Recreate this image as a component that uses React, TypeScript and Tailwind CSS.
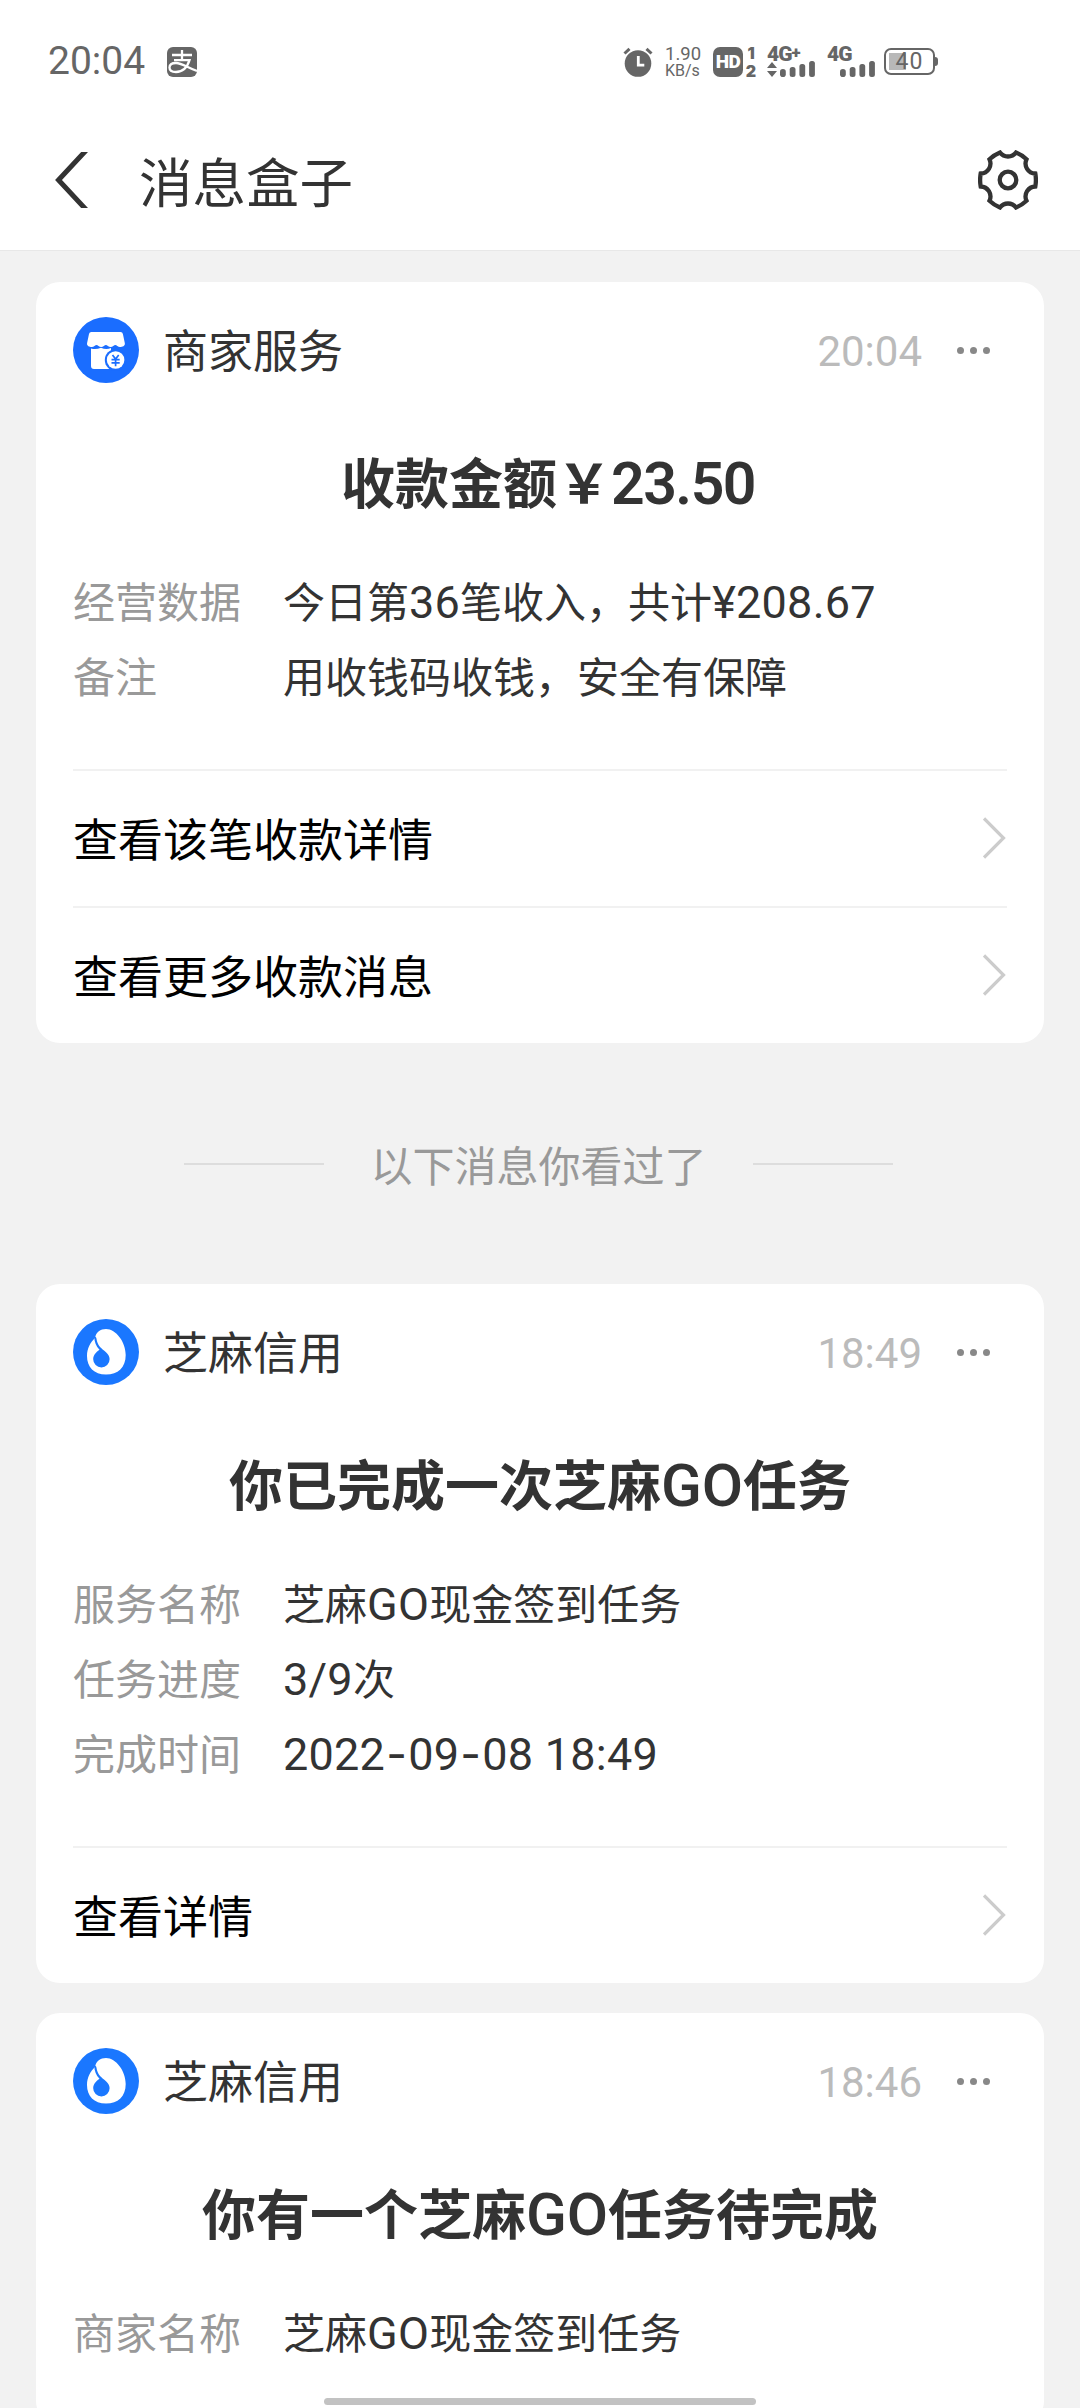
import type { ReactNode } from 'react';

interface Field {
  label: string;
  value: string;
}

interface Message {
  id: string;
  source: 'merchant' | 'sesame';
  name: string;
  time: string;
  title: string;
  fields: Field[];
  actions: string[];
}

const unreadMessages: Message[] = [
  {
    id: 'receipt',
    source: 'merchant',
    name: '商家服务',
    time: '20:04',
    title: '收款金额￥23.50',
    fields: [
      { label: '经营数据', value: '今日第36笔收入，共计¥208.67' },
      { label: '备注', value: '用收钱码收钱，安全有保障' },
    ],
    actions: ['查看该笔收款详情', '查看更多收款消息'],
  },
];

const readMessages: Message[] = [
  {
    id: 'task-done',
    source: 'sesame',
    name: '芝麻信用',
    time: '18:49',
    title: '你已完成一次芝麻GO任务',
    fields: [
      { label: '服务名称', value: '芝麻GO现金签到任务' },
      { label: '任务进度', value: '3/9次' },
      { label: '完成时间', value: '2022-09-08 18:49' },
    ],
    actions: ['查看详情'],
  },
  {
    id: 'task-pending',
    source: 'sesame',
    name: '芝麻信用',
    time: '18:46',
    title: '你有一个芝麻GO任务待完成',
    fields: [{ label: '商家名称', value: '芝麻GO现金签到任务' }],
    actions: [],
  },
];

// Latin letters and digits are set slightly larger than the Chinese around them,
// and Roboto's hyphen is too short for dates
const MixedText = ({ children, latinClass }: { children: string; latinClass: string }) => (
  <>
    {children.split(/([\x20-\x7e¥]+)/).map((part, index) =>
      index % 2 === 1 ? (
        <span key={index} className={latinClass}>
          {part.split(/(-)/).map((piece, i) =>
            piece === '-' ? (
              <span key={i} className="mx-px font-[Inter,sans-serif]">
                -
              </span>
            ) : (
              piece
            )
          )}
        </span>
      ) : (
        part
      )
    )}
  </>
);

const AlarmIcon = () => (
  <svg className="h-[30px] w-[30px]" viewBox="0 0 30 30" fill="none">
    <circle cx="15" cy="16.500" r="13.300" fill="#666" />
    <path d="M1.500 6.500 6.500 1.800M28.500 6.500l-5-4.700" stroke="#666" strokeWidth="3" />
    <path d="M15.300 9v9.200h6" stroke="#fff" strokeWidth="2.800" />
  </svg>
);

const SignalBars = () => (
  <svg className="h-4 w-[35px]" viewBox="0 0 35 16" fill="#666">
    <rect x="0" y="8" width="5.800" height="8" rx="2.800" />
    <rect x="9.700" y="6" width="5.800" height="10" rx="2.500" />
    <rect x="19.400" y="3" width="5.800" height="13" rx="2.500" />
    <rect x="29.100" y="0" width="5.800" height="16" rx="2.500" />
  </svg>
);

const StatusBar = () => (
  <div className="flex h-[110px] items-center pt-[13px] pl-[48px] font-[Roboto,sans-serif] text-[#666]">
    <span className="w-[119px] text-[39px] leading-none">20:04</span>
    <svg className="h-[30px] w-[30px]" viewBox="0 0 30 30" fill="none">
      <rect width="30" height="30" rx="6" fill="#666" />
      <path
        d="M5 8h20M15 3v10M7 13.200h15.500C21 18 17 25 9 25c-4 0-6.500-1.700-6.500-4.500S5 16 9 16c6 0 12 5 21 8"
        stroke="#fff"
        strokeWidth="2.300"
      />
    </svg>

    <div className="ml-[426px] flex items-center">
      <AlarmIcon />
      <div className="ml-3 flex w-[36px] flex-col">
        <span className="text-[18.500px] leading-[18px]">1.90</span>
        <span className="text-[16px] leading-[16px]">KB/s</span>
      </div>
      <div className="ml-[12px] flex h-[30px] w-[30px] items-center justify-center rounded-[7px] bg-[#666] text-[19px] font-black leading-none text-white">
        <span className="tracking-[-0.5px]">HD</span>
      </div>
      <div className="ml-[2px] flex w-[12px] flex-col items-center font-[Inter,sans-serif] text-[16px] font-black leading-[18px]">
        <span>1</span>
        <span>2</span>
      </div>
      <div className="ml-[10px] flex h-[30px] w-[48px] flex-col justify-between">
        <div className="flex font-black">
          <span className="text-[21px] leading-[14px] tracking-[-1px]">4G</span>
          <span className="text-[17px] leading-[10px]">+</span>
        </div>
        <div className="flex items-end gap-[3px]">
          <svg className="h-[15px] w-[10px]" viewBox="0 0 10 15" fill="#666">
            <path d="M5 0l5 6H0zM5 15l5-6H0z" />
          </svg>
          <SignalBars />
        </div>
      </div>
      <div className="ml-[12px] flex h-[30px] w-[48px] flex-col justify-between">
        <span className="text-[21px] font-black leading-[14px] tracking-[-1px]">4G</span>
        <div className="flex justify-end">
          <SignalBars />
        </div>
      </div>
      <div className="ml-[9px] flex items-center">
        <div className="flex h-[27px] w-[51px] items-center justify-center rounded-[7px] border-[2.500px] border-[#666] bg-[linear-gradient(#b8b8b8,#b8b8b8)] bg-[length:17px_17px] bg-[position:3px_center] bg-no-repeat text-[23px] leading-none tracking-[1px]">
          40
        </div>
        <span className="h-[9px] w-[3px] rounded-r-sm bg-[#666]" />
      </div>
    </div>
  </div>
);

const GearIcon = () => (
  <svg className="h-[60px] w-[60px]" viewBox="-30 -30 60 60" fill="none" stroke="#333" strokeWidth="4.300">
    <path d="M-8-27.500A10 10 0 0 0 8-27.500Q14-25 18.500-20.700A10 10 0 0 0 27.300-6.500Q28.500 0 27.300 6.500A10 10 0 0 0 18.500 20.700Q14 25 8 27.500A10 10 0 0 0-8 27.500Q-14 25-18.500 20.700A10 10 0 0 0-27.300 6.500Q-28.500 0-27.300-6.500A10 10 0 0 0-18.500-20.700Q-14-25-8-27.500Z" />
    <circle r="8.300" />
  </svg>
);

const NavBar = () => (
  <header className="flex h-[141px] items-center border-b border-[#e8e8e8] pr-[42px] pl-[52px]">
    <svg className="h-[56px] w-[40px]" viewBox="0 0 40 56" fill="none">
      <path d="M36.300-4 6.500 28l29.800 32" stroke="#333" strokeWidth="5" />
    </svg>
    <h1 className="ml-[47px] flex-1 text-[53.500px] leading-[80px]">消息盒子</h1>
    <GearIcon />
  </header>
);

const MerchantIcon = () => (
  <svg className="h-[66px] w-[66px]" viewBox="0 0 66 66">
    <circle cx="33" cy="33" r="33" fill="#1a6dff" />
    <path
      d="M18.500 15h29q2 0 2.400 2l1.900 9c.6 3-2.500 4-4.800 4-2 0-3.500-2-4.700-2s-2.600 2-4.700 2-3.500-2-4.700-2-2.600 2-4.700 2-3.500-2-4.700-2-2.600 2-4.700 2c-2.300 0-5.300-1-4.700-4l1.900-9q.4-2 2.400-2z"
      fill="#fff"
    />
    <path d="M18 31.500q5 1.500 10-.8 5 2.200 10 .3V52H21q-3 0-3-3z" fill="#fff" />
    <circle cx="42.600" cy="43" r="10.800" fill="#1a6dff" />
    <circle cx="42.600" cy="43" r="8.800" fill="#fff" />
    <path d="M39.500 38l3.100 4 3.100-4M42.600 42v7.300M38.500 42.600h8.200M38.500 45.800h8.200" fill="none" stroke="#1a6dff" strokeWidth="1.700" />
  </svg>
);

const SesameIcon = () => (
  <svg className="h-[66px] w-[66px]" viewBox="0 0 66 66">
    <circle cx="33" cy="33" r="33" fill="#1a77ff" />
    <path
      d="M33 10c10 0 19.700 13 19.700 26C52.700 48.500 45 55.500 33 55.500S14 48 14 37c0-8 3.500-13.500 8-18C23 13 27.500 10 33 10z"
      fill="#fff"
    />
    <path
      d="M21.300 17.500c1.600 0 2 1 2.200 2.200.9 6.300 4 8.800 7.500 11.800 3.200 2.700 5.600 5 5.600 8.700a8.200 8.200 0 0 1-16.400 0c0-4 2.500-6.700 6.300-9.500-3.500-3.700-5.200-7.500-5.200-13.200z"
      fill="#1a77ff"
    />
  </svg>
);

const Chevron = () => (
  <svg className="h-[42px] w-[24px]" viewBox="0 0 24 42" fill="none">
    <path d="M1 1.500 20.500 21 1 40.500" stroke="#ccc" strokeWidth="3.200" />
  </svg>
);

const MoreButton = () => (
  <button type="button" aria-label="更多" className="flex gap-[6px]">
    <span className="h-[7px] w-[7px] rounded-full bg-[#888]" />
    <span className="h-[7px] w-[7px] rounded-full bg-[#888]" />
    <span className="h-[7px] w-[7px] rounded-full bg-[#888]" />
  </button>
);

const MessageCard = ({ message }: { message: Message }) => {
  const isMerchant = message.source === 'merchant';

  return (
    <article className="rounded-3xl bg-white px-[37px] pt-[35px]">
      <div className="flex h-[66px] items-center pr-[17px]">
        {isMerchant ? <MerchantIcon /> : <SesameIcon />}
        <span className="ml-6 flex-1 pb-[3px] text-[45px] leading-[62px]">{message.name}</span>
        <span className="mr-[35px] pt-1 font-[Roboto,sans-serif] text-[42px] leading-none text-[#bbb]">
          {message.time}
        </span>
        <MoreButton />
      </div>

      <h2 className={`mt-[58px] text-center text-[54px] font-bold leading-[80px] ${isMerchant ? 'pl-4' : ''}`}>
        <MixedText
          latinClass={
            isMerchant
              ? 'font-[Roboto,sans-serif] text-[59px] font-semibold leading-none tracking-[-1.5px]'
              : 'font-[Roboto,sans-serif] text-[60px] font-medium leading-none'
          }
        >
          {message.title}
        </MixedText>
      </h2>

      <dl className="mt-[41px] pb-[57px]">
        {message.fields.map((field) => (
          <div key={field.label} className="flex h-[75px] items-center text-[42px] leading-[75px]">
            <dt className="w-[210px] text-[#999]">{field.label}</dt>
            <dd className="whitespace-pre">
              <MixedText latinClass="font-[Roboto,sans-serif] text-[45px] leading-none tracking-[0.25px]">
                {field.value}
              </MixedText>
            </dd>
          </div>
        ))}
      </dl>

      {message.actions.map((action) => (
        <a
          key={action}
          className="flex h-[137px] items-center justify-between border-t-2 border-[#f1f1f1] pb-px text-[45px] text-black"
        >
          <span className="leading-[66px]">{action}</span>
          <Chevron />
        </a>
      ))}
    </article>
  );
};

const ReadDivider = ({ children }: { children: ReactNode }) => (
  <div className="flex h-[241px] items-center justify-center gap-[46px] pr-[3px] text-[42px] text-[#999]">
    <span className="h-0.5 w-[140px] bg-[#ddd]" />
    <span className="leading-[60px]">{children}</span>
    <span className="h-0.5 w-[140px] bg-[#ddd]" />
  </div>
);

export default function App() {
  return (
    <div className="relative flex h-[2408px] w-[1080px] flex-col overflow-hidden bg-[#f2f2f2] font-['Noto_Sans_CJK_SC',sans-serif] text-[#333]">
      <div className="shrink-0 bg-white">
        <StatusBar />
        <NavBar />
      </div>

      <main className="flex flex-col px-9 pt-[31px]">
        {unreadMessages.map((message) => (
          <MessageCard key={message.id} message={message} />
        ))}
        <ReadDivider>以下消息你看过了</ReadDivider>
        <div className="flex flex-col gap-[30px]">
          {readMessages.map((message) => (
            <MessageCard key={message.id} message={message} />
          ))}
        </div>
      </main>

      {/* system home indicator */}
      <div className="absolute bottom-[3px] left-[324px] h-[7px] w-[432px] rounded-full bg-[#c2c2c2]" />
    </div>
  );
}
